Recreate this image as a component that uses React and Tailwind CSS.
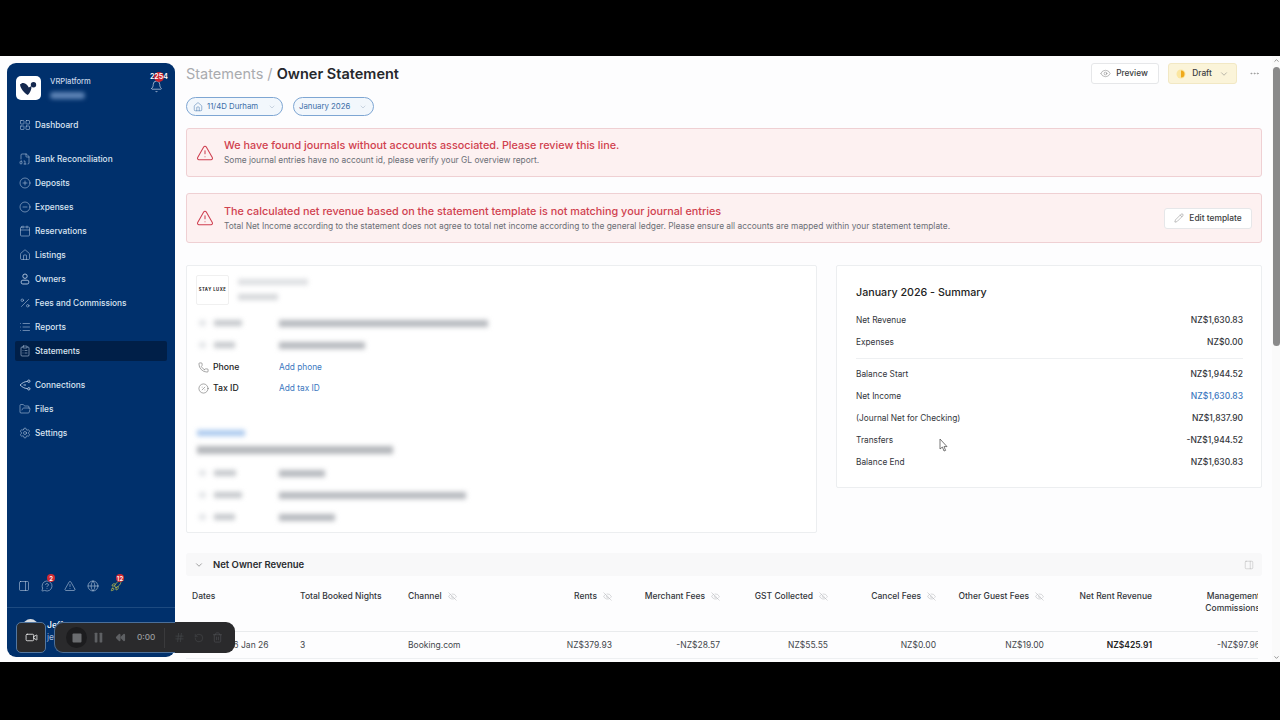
import React from 'react';
import {
  LayoutGrid, FileDigit, CirclePlus, CircleMinus, Calendar, House, Percent, List, ClipboardList,
  FolderOpen, Settings, Bell, PanelRight, MessageCircleQuestion, TriangleAlert, Globe, Rocket,
  Eye, EyeOff, ChevronDown, Ellipsis, Pencil, Phone, CirclePercent, Video, Square, Pause, Rewind, Hash,
  RotateCcw, Trash2, ChevronUp,
} from 'lucide-react';

function OwnerIcon({ className }) {
  return (
    <svg className={className} width="12" height="12" viewBox="0 0 12 12" fill="none" stroke="currentColor" strokeWidth="0.9">
      <circle cx="6" cy="3.2" r="2.2" />
      <rect x="2.2" y="7.2" width="7.6" height="3.8" rx="1.6" />
    </svg>
  );
}

function ConnectionIcon({ className }) {
  return (
    <svg className={className} width="12" height="12" viewBox="0 0 12 12" fill="none" stroke="currentColor" strokeWidth="0.9">
      <circle cx="9.8" cy="2.2" r="1.2" />
      <circle cx="9.8" cy="9.8" r="1.2" />
      <path d="M8.5 2.4C5 2.6 3.4 4 1 6C3.4 8 5 9.4 8.5 9.6" />
      <path d="M4.5 6H7" />
    </svg>
  );
}

const navGroups = [
  [{ label: 'Dashboard', icon: LayoutGrid }],
  [
    { label: 'Bank Reconciliation', icon: FileDigit },
    { label: 'Deposits', icon: CirclePlus },
    { label: 'Expenses', icon: CircleMinus },
    { label: 'Reservations', icon: Calendar },
    { label: 'Listings', icon: House },
    { label: 'Owners', icon: OwnerIcon },
    { label: 'Fees and Commissions', icon: Percent },
    { label: 'Reports', icon: List },
    { label: 'Statements', icon: ClipboardList, active: true },
  ],
  [
    { label: 'Connections', icon: ConnectionIcon },
    { label: 'Files', icon: FolderOpen },
    { label: 'Settings', icon: Settings },
  ],
];

const columns = [
  { label: 'Dates', value: '23 Jan - 26 Jan 26', left: true },
  { label: 'Total Booked Nights', value: '3', left: true },
  { label: 'Channel', value: 'Booking.com', left: true, off: true },
  { label: 'Rents', value: 'NZ$379.93', off: true },
  { label: 'Merchant Fees', value: '-NZ$28.57', off: true },
  { label: 'GST Collected', value: 'NZ$55.55', off: true },
  { label: 'Cancel Fees', value: 'NZ$0.00', off: true },
  { label: 'Other Guest Fees', value: 'NZ$19.00', off: true },
  { label: 'Net Rent Revenue', value: 'NZ$425.91', strong: true },
  { label: 'Management Commissions', value: '-NZ$97.96', wrap: true },
];

const summaryTop = [
  ['Net Revenue', 'NZ$1,630.83'],
  ['Expenses', 'NZ$0.00'],
];

const summaryBottom = [
  ['Balance Start', 'NZ$1,944.52'],
  ['Net Income', 'NZ$1,630.83', true],
  ['(Journal Net for Checking)', 'NZ$1,837.90'],
  ['Transfers', '-NZ$1,944.52'],
  ['Balance End', 'NZ$1,630.83'],
];

function Sidebar() {
  return (
    <aside className="mt-[7px] ml-[7px] flex h-[594px] w-[168px] shrink-0 flex-col overflow-hidden rounded-[9px] bg-[#00306c] text-[#dbe5f2]">
      <div className="flex h-[50px] shrink-0 items-start pt-[13px] pr-[11px] pl-[9px]">
        <div className="flex h-[24px] w-[25px] items-center justify-center rounded-[5px] bg-white">
          <svg width="19" height="15" viewBox="0 0 19 15">
            <path d="M1 3.5C3 1 6.5 1.5 8.5 4.5L9.8 6.5L12.5 5C12.8 8.5 11 12 8.8 14C5.5 12 1.6 8 1 3.5Z" fill="#14294f" />
            <circle cx="14.5" cy="3.8" r="2.7" fill="#14294f" />
          </svg>
        </div>
        <div className="ml-[9px] flex flex-col">
          <span className="text-[7.6px] leading-[11px] font-medium text-[#c9d7ea]">VRPlatform</span>
          <span className="mt-[5px] h-[7px] w-[35px] rounded-sm bg-[#5d83b5] blur-[2px]" />
        </div>
        <div className="relative mt-[4px] ml-auto">
          <Bell size={13} strokeWidth={1.2} className="mr-[1px]" />
          <span className="absolute top-[-8px] left-[4px] h-[10px] w-[10px] rounded-full bg-[#c9242f]" />
          <span className="absolute top-[-7px] left-[0px] text-[7px] leading-[8px] font-semibold text-white">2254</span>
        </div>
      </div>
      <nav className="flex flex-col gap-[10px] px-[8px]">
        {navGroups.map((group, i) => (
          <div key={i} className="flex flex-col">
            {group.map(({ label, icon: Icon, active }) => (
              <div key={label} className="flex h-[24px] items-center">
                <div className={`flex h-[20px] w-full items-center rounded-[2px] pl-[4px] text-[8.3px] font-medium ${active ? 'bg-[#001f48]' : ''}`}>
                  <Icon size={12} strokeWidth={1.1} className="shrink-0 text-[#bccde3]" />
                  <span className="ml-[4px] whitespace-nowrap">{label}</span>
                </div>
              </div>
            ))}
          </div>
        ))}
      </nav>
      <div className="mt-auto flex h-[44px] shrink-0 items-start gap-[11px] border-b border-[#1d4a80] pt-[16px] pl-[11px] text-[#c5d4e8]">
        <PanelRight size={12} strokeWidth={1.1} />
        <div className="relative">
          <MessageCircleQuestion size={12} strokeWidth={1.1} />
          <span className="absolute top-[-6px] left-[6px] flex h-[8px] w-[8px] items-center justify-center rounded-full bg-[#d12a33] text-[6px] font-semibold text-white">2</span>
        </div>
        <TriangleAlert size={12} strokeWidth={1.1} />
        <Globe size={12} strokeWidth={1.1} />
        <div className="relative">
          <Rocket size={12} strokeWidth={1.3} className="text-[#d5d04a]" />
          <span className="absolute top-[-6px] left-[6px] flex h-[8px] w-[8px] items-center justify-center rounded-full bg-[#d12a33] text-[6px] font-semibold text-white">12</span>
        </div>
      </div>
      <div className="flex h-[49px] shrink-0 items-start pt-[11px] pl-[16px]">
        <span className="h-[18px] w-[15px] rounded-full bg-[#d9dde2]" />
        <div className="ml-[9px] flex flex-col text-[8.5px] leading-[12px]">
          <span className="font-medium text-white">Jeff</span>
          <span className="text-[#a9bfdb]">jeff</span>
        </div>
      </div>
    </aside>
  );
}

function Alert({ title, text, action, height }) {
  return (
    <div className={`flex items-center rounded-[3px] border border-[#efd0d3] bg-[#fdf1f1] pr-[9px] pl-[9px] ${height}`}>
      <TriangleAlert size={18} strokeWidth={1.4} className="shrink-0 text-[#cf3f50]" />
      <div className="ml-[10px] flex flex-col gap-[2px]">
        <span className="text-[10.8px] leading-[14px] font-medium text-[#d0414f]">{title}</span>
        <span className="text-[8.4px] leading-[11px] text-[#6b6f76]">{text}</span>
      </div>
      {action}
    </div>
  );
}

function BlurRow({ label, value }) {
  return (
    <div className="flex h-[22px] items-center blur-[2.5px]">
      <span className="ml-[12px] h-[6px] w-[7px] bg-[#e3e5e8]" />
      <span className={`ml-[8px] h-[6px] bg-[#c4c7cb] ${label}`} />
      <span className={`absolute left-[92px] h-[7px] bg-[#b5b8bd] ${value}`} />
    </div>
  );
}

function ContactRow({ icon: Icon, label, link }) {
  return (
    <div className="flex h-[21px] items-center">
      <Icon size={11} strokeWidth={1.1} className="ml-[11px] text-[#555]" />
      <span className="ml-[4px] w-[66px] text-[8.7px] font-medium text-[#222]">{label}</span>
      <span className="text-[8.3px] text-[#3b78c0]">{link}</span>
    </div>
  );
}

function OwnerCard() {
  return (
    <div className="relative h-[268px] w-[631px] shrink-0 rounded-[2px] border border-[#eceef0] bg-white">
      <div className="flex pt-[9px] pl-[9px]">
        <div className="flex h-[30px] w-[33px] items-center justify-center rounded-[2px] border border-[#f0f0f0] pt-[1px] text-[4.2px] font-bold tracking-[0.5px] whitespace-nowrap text-[#222]">STAY LUXE</div>
        <div className="mt-[4px] ml-[9px] flex flex-col gap-[9px] blur-[2.5px]">
          <span className="h-[6px] w-[70px] bg-[#dcdee1]" />
          <span className="h-[6px] w-[40px] bg-[#d4d6d9]" />
        </div>
      </div>
      <div className="relative mt-[7px]">
        <BlurRow label="w-[28px]" value="w-[209px]" />
        <BlurRow label="w-[21px]" value="w-[86px]" />
      </div>
      <div className="mt-[1px]">
        <ContactRow icon={Phone} label="Phone" link="Add phone" />
        <ContactRow icon={CirclePercent} label="Tax ID" link="Add tax ID" />
      </div>
      <div className="mt-[31px] ml-[10px] h-[6px] w-[48px] bg-[#a9c8ee] blur-[2.5px]" />
      <div className="mt-[10px] ml-[10px] h-[8px] w-[196px] bg-[#b3b6ba] blur-[2.5px]" />
      <div className="relative mt-[8px]">
        <BlurRow label="w-[22px]" value="w-[46px]" />
        <BlurRow label="w-[28px]" value="w-[187px]" />
        <BlurRow label="w-[21px]" value="w-[56px]" />
      </div>
    </div>
  );
}

function SummaryRow({ label, value, blue }) {
  return (
    <div className="flex h-[22px] items-center justify-between">
      <span className="text-[8.3px] text-[#33363b]">{label}</span>
      <span className={`text-[8.5px] font-medium ${blue ? 'text-[#3b78c0]' : 'text-[#33363b]'}`}>{value}</span>
    </div>
  );
}

function SummaryCard() {
  return (
    <div className="h-[223px] w-[426px] shrink-0 rounded-[2px] border border-[#eceef0] bg-white pt-[20px] pr-[18px] pl-[19px]">
      <h2 className="text-[10.7px] leading-[14px] font-medium text-[#222]">January 2026 - Summary</h2>
      <div className="mt-[9px] border-b border-[#eef0f2] pb-[5px]">
        {summaryTop.map(([label, value]) => <SummaryRow key={label} label={label} value={value} />)}
      </div>
      <div className="mt-[4px]">
        {summaryBottom.map(([label, value, blue]) => <SummaryRow key={label} label={label} value={value} blue={blue} />)}
      </div>
    </div>
  );
}

function RevenueTable() {
  return (
    <div className="w-[1072px] overflow-hidden">
      <div className="grid w-[1080px] grid-cols-[repeat(10,108px)]">
        {columns.map((col) => (
          <div key={col.label} className={`flex h-[56px] border-b border-[#e9ebed] px-[6px] pt-[14px] text-[8.5px] leading-[12px] font-medium text-[#33363b] ${col.left ? 'justify-start' : 'justify-end text-right'}`}>
            <span className={col.wrap ? 'w-[58px] shrink-0' : 'whitespace-nowrap'}>{col.label}</span>
            {col.off ? <EyeOff size={9} strokeWidth={1} className="mt-[2px] ml-[6px] shrink-0 text-[#9a9da2]" /> : null}
          </div>
        ))}
        {columns.map((col) => (
          <div key={col.label} className={`flex h-[27px] items-center border-b border-[#eef0f2] px-[6px] text-[8.5px] whitespace-nowrap ${col.left ? 'justify-start' : 'justify-end'} ${col.strong ? 'font-semibold text-[#222]' : 'text-[#44474c]'}`}>
            {col.value}
          </div>
        ))}
      </div>
    </div>
  );
}

function RecorderBar() {
  return (
    <div className="absolute top-[566px] left-[16px] flex items-center gap-[8px]">
      <div className="flex h-[31px] w-[30px] items-center justify-center rounded-[5px] border border-[#54779f] bg-[#2a2a2c]">
        <Video size={13} strokeWidth={1.4} className="text-white" />
      </div>
      <div className="relative flex h-[31px] w-[181px] items-center rounded-[9px] bg-[#2a2a2c] pl-[12px] text-[#5e6063]">
        <span className="absolute top-0 left-0 h-full w-[121px] rounded-l-[9px] border-y border-l border-[#4b6f99]" />
        <div className="flex h-[21px] w-[21px] items-center justify-center rounded-full bg-[#1c1c1e]">
          <Square size={12} fill="#6a6c6f" strokeWidth={0} />
        </div>
        <Pause size={13} fill="#5e6063" strokeWidth={0} className="ml-[5px]" />
        <Rewind size={11} fill="#5e6063" strokeWidth={0} className="ml-[10px]" />
        <span className="ml-[11px] text-[8.2px] font-medium text-[#9a9c9f]">0:00</span>
        <span className="ml-[9px] h-[20px] w-px bg-[#3a3a3c]" />
        <Hash size={11} strokeWidth={1.2} className="ml-[9px] text-[#4c4e50]" />
        <RotateCcw size={10} strokeWidth={1.2} className="ml-[9px] text-[#4c4e50]" />
        <Trash2 size={11} strokeWidth={1.2} className="ml-[8px] text-[#55575a]" />
      </div>
    </div>
  );
}

export default function App() {
  return (
    <div className="flex h-[720px] w-[1280px] flex-col bg-black font-['Inter',sans-serif]">
      <div className="h-[56px] shrink-0" />
      <div className="relative flex h-[606px] shrink-0 overflow-hidden bg-[#fdfdfe]">
        <Sidebar />
        <main className="ml-[11px] flex w-[1076px] shrink-0 flex-col pt-[7px]">
          <div className="flex h-[21px] items-center">
            <h1 className="text-[14.5px] font-semibold text-[#26282c]">
              <span className="font-normal text-[#a9abaf]">Statements / </span>Owner Statement
            </h1>
            <div className="ml-auto flex items-center">
              <button className="flex h-[21px] w-[68px] items-center justify-center gap-[5px] rounded-[3px] border border-[#e6e7e9] bg-white pr-[2px] text-[8.3px] font-medium text-[#3a3c40]">
                <Eye size={11} strokeWidth={1.1} className="text-[#777]" />Preview
              </button>
              <button className="ml-[9px] flex h-[21px] w-[69px] items-center justify-center rounded-[3px] border border-[#f2e8c4] bg-[#fbf4d9] text-[8.3px] font-medium text-[#3a3c40]">
                <svg width="10" height="10" viewBox="0 0 10 10">
                  <circle cx="5" cy="5" r="4.5" fill="#fbe6a0" />
                  <path d="M5 1.5A3.5 3.5 0 0 1 5 8.5Z" fill="#efa91c" />
                </svg>
                <span className="ml-[6px]">Draft</span>
                <ChevronDown size={10} strokeWidth={1.2} className="ml-[7px] text-[#777]" />
              </button>
              <Ellipsis size={11} className="mr-[2px] ml-[12px] text-[#999]" />
            </div>
          </div>
          <div className="mt-[13px] flex gap-[10px] text-[#3b6ea8]">
            <div className="flex h-[19px] w-[97px] items-center rounded-full border border-[#7ea6d3] bg-[#f2f7fc] pl-[6px] text-[7.8px]">
              <House size={10} strokeWidth={1.2} />
              <span className="ml-[4px]">11/4D Durham</span>
              <ChevronDown size={8} strokeWidth={1.2} className="mr-[6px] ml-auto text-[#8aa0b8]" />
            </div>
            <div className="flex h-[19px] w-[81px] items-center rounded-full border border-[#7ea6d3] bg-[#f2f7fc] pl-[5px] text-[7.8px]">
              <span>January 2026</span>
              <ChevronDown size={8} strokeWidth={1.2} className="mr-[6px] ml-auto text-[#8aa0b8]" />
            </div>
          </div>
          <div className="mt-[12px] flex flex-col gap-[16px]">
            <Alert
              height="h-[49px]"
              title="We have found journals without accounts associated. Please review this line."
              text="Some journal entries have no account id, please verify your GL overview report."
            />
            <Alert
              height="h-[50px]"
              title="The calculated net revenue based on the statement template is not matching your journal entries"
              text="Total Net Income according to the statement does not agree to total net income according to the general ledger. Please ensure all accounts are mapped within your statement template."
              action={
                <button className="ml-auto flex h-[21px] w-[88px] items-center justify-center gap-[5px] rounded-[3px] border border-[#e6e7e9] bg-white text-[8.4px] font-medium text-[#3a3c40]">
                  <Pencil size={10} strokeWidth={1.1} className="text-[#777]" />Edit template
                </button>
              }
            />
          </div>
          <div className="mt-[22px] flex items-start gap-[19px]">
            <OwnerCard />
            <SummaryCard />
          </div>
          <div className="mt-[-3px] h-[23px] shrink-0" />
          <div className="flex h-[23px] shrink-0 items-center rounded-[3px] bg-[#f8f8f9] px-[8px] pt-[1px] text-[9.5px] font-semibold text-[#2a2c30]">
            <ChevronDown size={10} strokeWidth={1.3} className="text-[#555]" />
            <span className="ml-[9px]">Net Owner Revenue</span>
            <PanelRight size={10} strokeWidth={1} className="ml-auto text-[#aaa]" />
          </div>
          <RevenueTable />
        </main>
        <div className="relative ml-auto flex w-[8px] flex-col items-center bg-[#fafafa]">
          <ChevronUp size={7} strokeWidth={3} className="mt-[1px] text-[#888]" />
          <div className="mt-[3px] h-[279px] w-[7px] rounded-full bg-[#8a8a8a]" />
          <ChevronDown size={7} strokeWidth={3} className="mt-auto mb-[1px] text-[#888]" />
        </div>
        <RecorderBar />
        <svg className="absolute top-[382px] left-[939px]" width="9" height="14" viewBox="0 0 9 14">
          <path d="M1 1V11L3.4 9L5 13L6.6 12.4L5 8.6H8Z" fill="#fff" stroke="#555" strokeWidth="0.8" />
        </svg>
      </div>
    </div>
  );
}
